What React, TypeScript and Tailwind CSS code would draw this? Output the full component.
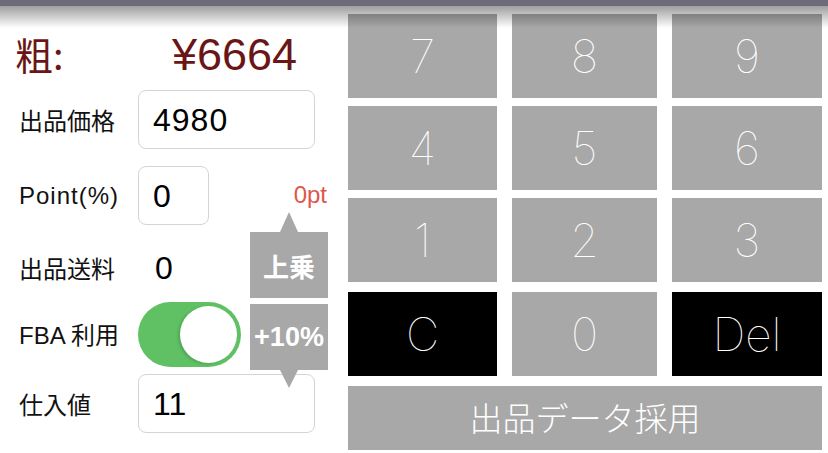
import { useState } from 'react';

const KEYS = [
  ['7', '8', '9'],
  ['4', '5', '6'],
  ['1', '2', '3'],
  ['C', '0', 'Del'],
];

const JP = { fontFamily: '"Noto Sans CJK JP", "Noto Sans", sans-serif' };
const NUM = { fontFamily: '"Liberation Sans", "Noto Sans CJK JP", sans-serif' };

function Key({ label }: { label: string }) {
  const dark = label === 'C' || label === 'Del';
  return (
    <button
      className={`flex h-[84px] items-center justify-center text-[46px] font-thin text-white ${
        dark ? 'bg-black' : 'bg-[#a8a8a8]'
      }`}
      style={{ fontFamily: 'Inter, Roboto, "Liberation Sans", sans-serif' }}
    >
      {label}
    </button>
  );
}

function Toggle({ on, onChange }: { on: boolean; onChange: (v: boolean) => void }) {
  return (
    <button
      onClick={() => onChange(!on)}
      className={`flex h-[65px] w-[103px] items-center rounded-full p-[4px] ${
        on ? 'justify-end bg-[#5fc164]' : 'justify-start bg-[#e5e5e5]'
      }`}
    >
      <span className="h-[57px] w-[57px] rounded-full bg-white shadow-[-2px_1px_3px_rgba(0,0,0,0.15)]" />
    </button>
  );
}

export default function App() {
  const [fba, setFba] = useState(true);

  return (
    <div className="relative flex h-[453px] w-[828px] overflow-hidden bg-white">
      {/* status bar shade */}
      <div className="pointer-events-none absolute left-0 right-0 top-0 z-10">
        <div className="h-[6px] bg-[#6c6c78]" />
        <div className="h-[22px] bg-gradient-to-b from-[rgba(0,0,0,0.38)] to-[rgba(0,0,0,0)]" />
      </div>

      {/* left form */}
      <div className="relative flex w-[348px] flex-col pl-[15px] pt-[28px]" style={JP}>
        <div className="flex h-[52px] items-center text-[#6a1616]">
          <span className="w-[157px] text-[38px] leading-none">粗:</span>
          <span className="text-[45px] leading-none" style={NUM}>¥6664</span>
        </div>

        <div className="mt-[10px] flex h-[59px] items-center">
          <span className="w-[123px] pl-[4px] text-[24px] text-[#111]">出品価格</span>
          <div className="flex h-[59px] w-[177px] items-center rounded-[8px] border border-[#d4d4d4] pl-[14px] text-[32px] tracking-[1px] text-black" style={NUM}>
            4980
          </div>
        </div>

        <div className="mt-[17px] flex h-[59px] items-center">
          <span className="w-[123px] pl-[4px] text-[24px] tracking-[1px] text-[#111]" style={NUM}>Point(%)</span>
          <div className="flex h-[59px] w-[71px] items-center rounded-[8px] border border-[#d4d4d4] pl-[14px] text-[32px] text-black" style={NUM}>
            0
          </div>
          <span className="mb-[2px] ml-auto mr-[21px] text-[24px] text-[#e0564a]" style={NUM}>0pt</span>
        </div>

        <div className="mt-[12px] flex h-[61px] items-center">
          <span className="w-[123px] pl-[4px] text-[24px] text-[#111]">出品送料</span>
          <span className="pl-[17px] text-[32px] text-black" style={NUM}>0</span>
        </div>

        <div className="mt-[4px] flex h-[65px] items-center">
          <span className="w-[123px] pl-[4px] text-[24px] text-[#111]">
            <span style={NUM}>FBA </span>利用
          </span>
          <Toggle on={fba} onChange={setFba} />
        </div>

        <div className="mt-[7px] flex h-[59px] items-center">
          <span className="w-[123px] pl-[4px] text-[24px] text-[#111]">仕入値</span>
          <div className="flex h-[59px] w-[177px] items-center rounded-[8px] border border-[#d4d4d4] pl-[14px] text-[32px] text-black" style={NUM}>
            11
          </div>
        </div>

        {/* stepper popover */}
        <div className="absolute left-[250px] top-[212px] flex w-[78px] flex-col items-center">
          <div className="h-0 w-0 border-x-[9px] border-b-[20px] border-x-transparent border-b-[#a8a8a8]" />
          <button className="flex h-[66px] w-[78px] items-center justify-center bg-[#a8a8a8] text-[26px] font-bold text-white">
            上乗
          </button>
          <button
            className="mt-[6px] flex h-[66px] w-[78px] items-center justify-center bg-[#a8a8a8] text-[27px] font-bold text-white"
            style={NUM}
          >
            +10%
          </button>
          <div className="h-0 w-0 border-x-[9px] border-t-[18px] border-x-transparent border-t-[#a8a8a8]" />
        </div>
      </div>

      {/* keypad */}
      <div className="flex w-[474px] flex-col pt-[14px]">
        <div className="grid grid-cols-[149px_145px_150px] gap-x-[15px] gap-y-[8px]">
          {KEYS.slice(0, 3).flat().map((k) => (
            <Key key={k} label={k} />
          ))}
        </div>
        <div className="mt-[10px] grid grid-cols-[149px_145px_150px] gap-x-[15px]">
          {KEYS[3].map((k) => (
            <Key key={k} label={k} />
          ))}
        </div>
        <button className="mt-[10px] flex h-[64px] items-center justify-center bg-[#a8a8a8] text-[33px] font-light text-white" style={JP}>
          出品データ採用
        </button>
      </div>
    </div>
  );
}
